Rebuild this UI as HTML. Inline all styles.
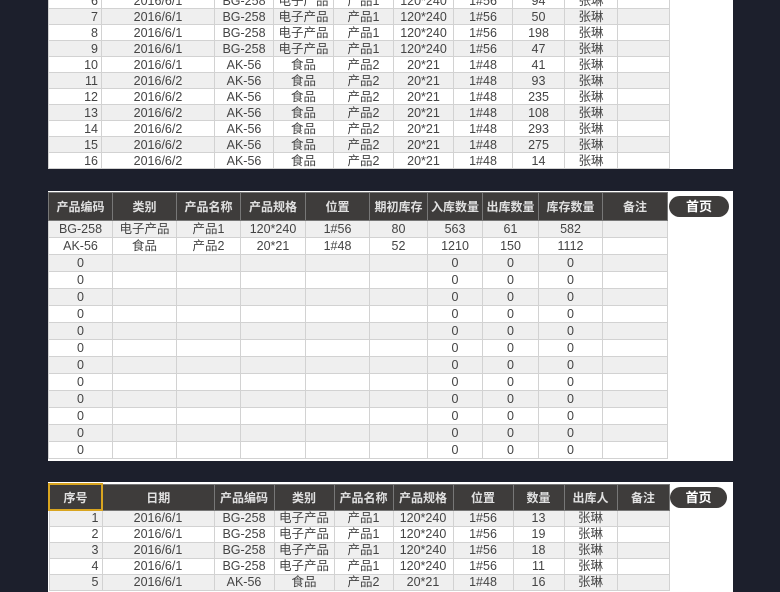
<!DOCTYPE html>
<html><head><meta charset="utf-8">
<style>
*{margin:0;padding:0;box-sizing:border-box}
body{width:780px;height:585px;overflow:hidden;background:#1c1f2c;font-family:"Liberation Sans","Noto Sans CJK SC",sans-serif;font-size:12.5px;color:#444;position:relative}
.panel{position:absolute;background:#fff;left:48px;width:685px}
table{position:absolute;border-collapse:collapse;table-layout:fixed}
td{border:1px solid #d2d2d2;text-align:center;white-space:nowrap;overflow:hidden;padding:0;line-height:14px}
tr.g td{background:#efefef}
td.n{text-align:right;padding-right:3px}
th{background:#3e3c3b;color:#e0e0e0;font-weight:bold;font-size:12px;border:1px solid #777;white-space:nowrap;overflow:hidden}
.btn{position:absolute;background:#3e3c3b;color:#fff;font-weight:bold;font-size:13px;text-align:center;border-radius:11px;line-height:21px}
.m tr{height:17px}
</style></head><body>

<div class="panel" style="top:0;height:169px"></div>
<table style="left:48px;top:-8px;width:621px">
<colgroup><col style="width:53px"><col style="width:113px"><col style="width:59px"><col style="width:60px"><col style="width:60px"><col style="width:60px"><col style="width:59px"><col style="width:52px"><col style="width:53px"><col style="width:52px"></colgroup>
<tr style="height:16px"><td class="n">6</td><td>2016/6/1</td><td>BG-258</td><td>电子产品</td><td>产品1</td><td>120*240</td><td>1#56</td><td>94</td><td>张琳</td><td></td></tr>
<tr class="g" style="height:16px"><td class="n">7</td><td>2016/6/1</td><td>BG-258</td><td>电子产品</td><td>产品1</td><td>120*240</td><td>1#56</td><td>50</td><td>张琳</td><td></td></tr>
<tr style="height:16px"><td class="n">8</td><td>2016/6/1</td><td>BG-258</td><td>电子产品</td><td>产品1</td><td>120*240</td><td>1#56</td><td>198</td><td>张琳</td><td></td></tr>
<tr class="g" style="height:16px"><td class="n">9</td><td>2016/6/1</td><td>BG-258</td><td>电子产品</td><td>产品1</td><td>120*240</td><td>1#56</td><td>47</td><td>张琳</td><td></td></tr>
<tr style="height:16px"><td class="n">10</td><td>2016/6/1</td><td>AK-56</td><td>食品</td><td>产品2</td><td>20*21</td><td>1#48</td><td>41</td><td>张琳</td><td></td></tr>
<tr class="g" style="height:16px"><td class="n">11</td><td>2016/6/2</td><td>AK-56</td><td>食品</td><td>产品2</td><td>20*21</td><td>1#48</td><td>93</td><td>张琳</td><td></td></tr>
<tr style="height:16px"><td class="n">12</td><td>2016/6/2</td><td>AK-56</td><td>食品</td><td>产品2</td><td>20*21</td><td>1#48</td><td>235</td><td>张琳</td><td></td></tr>
<tr class="g" style="height:16px"><td class="n">13</td><td>2016/6/2</td><td>AK-56</td><td>食品</td><td>产品2</td><td>20*21</td><td>1#48</td><td>108</td><td>张琳</td><td></td></tr>
<tr style="height:16px"><td class="n">14</td><td>2016/6/2</td><td>AK-56</td><td>食品</td><td>产品2</td><td>20*21</td><td>1#48</td><td>293</td><td>张琳</td><td></td></tr>
<tr class="g" style="height:16px"><td class="n">15</td><td>2016/6/2</td><td>AK-56</td><td>食品</td><td>产品2</td><td>20*21</td><td>1#48</td><td>275</td><td>张琳</td><td></td></tr>
<tr style="height:16px"><td class="n">16</td><td>2016/6/2</td><td>AK-56</td><td>食品</td><td>产品2</td><td>20*21</td><td>1#48</td><td>14</td><td>张琳</td><td></td></tr>
</table>

<div class="panel" style="top:191px;height:270px"></div>
<table class="m" style="left:48px;top:192px;width:619px">
<colgroup><col style="width:64px"><col style="width:64px"><col style="width:64px"><col style="width:65px"><col style="width:64px"><col style="width:58px"><col style="width:55px"><col style="width:56px"><col style="width:64px"><col style="width:65px"></colgroup>
<tr style="height:28px"><th>产品编码</th><th>类别</th><th>产品名称</th><th>产品规格</th><th>位置</th><th>期初库存</th><th>入库数量</th><th>出库数量</th><th>库存数量</th><th>备注</th></tr>
<tr class="g"><td>BG-258</td><td>电子产品</td><td>产品1</td><td>120*240</td><td>1#56</td><td>80</td><td>563</td><td>61</td><td>582</td><td></td></tr>
<tr><td>AK-56</td><td>食品</td><td>产品2</td><td>20*21</td><td>1#48</td><td>52</td><td>1210</td><td>150</td><td>1112</td><td></td></tr>
<tr class="g"><td>0</td><td></td><td></td><td></td><td></td><td></td><td>0</td><td>0</td><td>0</td><td></td></tr>
<tr><td>0</td><td></td><td></td><td></td><td></td><td></td><td>0</td><td>0</td><td>0</td><td></td></tr>
<tr class="g"><td>0</td><td></td><td></td><td></td><td></td><td></td><td>0</td><td>0</td><td>0</td><td></td></tr>
<tr><td>0</td><td></td><td></td><td></td><td></td><td></td><td>0</td><td>0</td><td>0</td><td></td></tr>
<tr class="g"><td>0</td><td></td><td></td><td></td><td></td><td></td><td>0</td><td>0</td><td>0</td><td></td></tr>
<tr><td>0</td><td></td><td></td><td></td><td></td><td></td><td>0</td><td>0</td><td>0</td><td></td></tr>
<tr class="g"><td>0</td><td></td><td></td><td></td><td></td><td></td><td>0</td><td>0</td><td>0</td><td></td></tr>
<tr><td>0</td><td></td><td></td><td></td><td></td><td></td><td>0</td><td>0</td><td>0</td><td></td></tr>
<tr class="g"><td>0</td><td></td><td></td><td></td><td></td><td></td><td>0</td><td>0</td><td>0</td><td></td></tr>
<tr><td>0</td><td></td><td></td><td></td><td></td><td></td><td>0</td><td>0</td><td>0</td><td></td></tr>
<tr class="g"><td>0</td><td></td><td></td><td></td><td></td><td></td><td>0</td><td>0</td><td>0</td><td></td></tr>
<tr><td>0</td><td></td><td></td><td></td><td></td><td></td><td>0</td><td>0</td><td>0</td><td></td></tr>
</table>
<div class="btn" style="left:669px;top:196px;width:60px;height:21px">首页</div>

<div class="panel" style="top:482px;height:110px"></div>
<table style="left:48px;top:483px;width:620px">
<colgroup><col style="width:53px"><col style="width:112px"><col style="width:60px"><col style="width:60px"><col style="width:59px"><col style="width:60px"><col style="width:60px"><col style="width:51px"><col style="width:53px"><col style="width:52px"></colgroup>
<tr style="height:26px"><th style="border:2px solid #d9a520">序号</th><th>日期</th><th>产品编码</th><th>类别</th><th>产品名称</th><th>产品规格</th><th>位置</th><th>数量</th><th>出库人</th><th>备注</th></tr>
<tr class="g" style="height:16px"><td class="n">1</td><td>2016/6/1</td><td>BG-258</td><td>电子产品</td><td>产品1</td><td>120*240</td><td>1#56</td><td>13</td><td>张琳</td><td></td></tr>
<tr style="height:16px"><td class="n">2</td><td>2016/6/1</td><td>BG-258</td><td>电子产品</td><td>产品1</td><td>120*240</td><td>1#56</td><td>19</td><td>张琳</td><td></td></tr>
<tr class="g" style="height:16px"><td class="n">3</td><td>2016/6/1</td><td>BG-258</td><td>电子产品</td><td>产品1</td><td>120*240</td><td>1#56</td><td>18</td><td>张琳</td><td></td></tr>
<tr style="height:16px"><td class="n">4</td><td>2016/6/1</td><td>BG-258</td><td>电子产品</td><td>产品1</td><td>120*240</td><td>1#56</td><td>11</td><td>张琳</td><td></td></tr>
<tr class="g" style="height:16px"><td class="n">5</td><td>2016/6/1</td><td>AK-56</td><td>食品</td><td>产品2</td><td>20*21</td><td>1#48</td><td>16</td><td>张琳</td><td></td></tr>
</table>
<div class="btn" style="left:670px;top:487px;width:57px;height:21px">首页</div>
</body></html>
